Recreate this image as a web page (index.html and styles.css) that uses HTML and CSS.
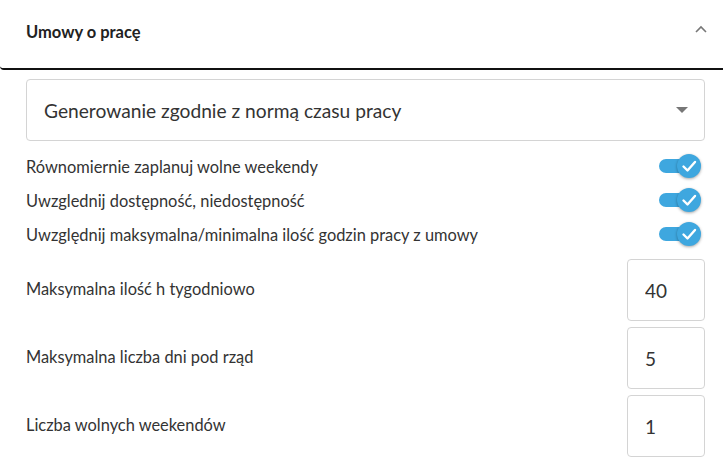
FILE: index.html
```html
<!DOCTYPE html>
<html lang="pl">

<head>
  <meta charset="UTF-8">
  <meta name="viewport" content="width=device-width, initial-scale=1.0">
  <title>Umowy o pracę</title>
  <link rel="stylesheet" href="styles.css">
</head>

<body>
  <section class="panel">
    <header class="panel-header">
      <h2 class="panel-title">Umowy o pracę</h2>
      <svg class="chevron" width="12" height="8" viewBox="0 0 12 8">
        <path d="M1 7L6 2L11 7" fill="none" stroke="#777" stroke-width="1.6"/>
      </svg>
    </header>

    <div class="panel-body">
      <div class="select-wrapper">
        <select class="mode-select">
          <option>Generowanie zgodnie z normą czasu pracy</option>
          <option>Generowanie dowolne</option>
        </select>
      </div>

      <ul class="switch-list">
        <li class="switch-row">
          <span>Równomiernie zaplanuj wolne weekendy</span>
          <label class="switch"><input type="checkbox" checked><span class="knob"></span></label>
        </li>
        <li class="switch-row">
          <span>Uwzglednij dostępność, niedostępność</span>
          <label class="switch"><input type="checkbox" checked><span class="knob"></span></label>
        </li>
        <li class="switch-row">
          <span>Uwzględnij maksymalna/minimalna ilość godzin pracy z umowy</span>
          <label class="switch"><input type="checkbox" checked><span class="knob"></span></label>
        </li>
      </ul>

      <div class="limits">
        <label class="limit-row">
          <span>Maksymalna ilość h tygodniowo</span>
          <input class="limit-input" type="number" value="40">
        </label>
        <label class="limit-row">
          <span>Maksymalna liczba dni pod rząd</span>
          <input class="limit-input" type="number" value="5">
        </label>
        <label class="limit-row">
          <span>Liczba wolnych weekendów</span>
          <input class="limit-input" type="number" value="1">
        </label>
      </div>
    </div>
  </section>
</body>

</html>
```

FILE: styles.css
```css
body {
  margin: 0;
  background: #fff;
  color: #333;
  font-family: Lato, "Liberation Sans", sans-serif;
}

.panel-header {
  height: 70px;
  box-sizing: border-box;
  display: flex;
  align-items: center;
  justify-content: space-between;
  padding: 0 16px 4px 26px;
  border-bottom: 2px solid #111;
  border-bottom-left-radius: 4px;
}

.panel-title {
  margin: 0;
  font-size: 16.5px;
  font-weight: 700;
  color: #222;
}

.chevron {
  margin-bottom: 6px;
}

.panel-body {
  padding: 9px 18px 0 26px;
}

.select-wrapper {
  position: relative;
}

.select-wrapper::after {
  content: '';
  position: absolute;
  right: 17px;
  top: 50%;
  margin-top: -3px;
  border-left: 6px solid transparent;
  border-right: 6px solid transparent;
  border-top: 6px solid #777;
  pointer-events: none;
}

select.mode-select {
  display: block;
  width: 100%;
  height: 62px;
  padding: 0 40px 0 17px;
  border: 1px solid #d4d4d4;
  border-radius: 4px;
  background: #fff;
  color: #333;
  font-family: inherit;
  font-size: 19.2px;
  appearance: none;
}

.switch-list {
  list-style: none;
  margin: 8px 0 0;
  padding: 0;
}

.switch-row {
  height: 34px;
  display: flex;
  align-items: center;
  justify-content: space-between;
  font-size: 16.4px;
}

.switch {
  position: relative;
  width: 42px;
  height: 24px;
  margin-right: 4px;
}

.switch input {
  display: none;
}

/* the track */
.switch::before {
  content: '';
  position: absolute;
  left: 0;
  top: 5px;
  width: 34px;
  height: 14px;
  border-radius: 7px;
  background: #3ea7df;
}

.knob {
  position: absolute;
  right: 0;
  top: 0;
  width: 24px;
  height: 24px;
  border-radius: 50%;
  background: #3ea7df url("data:image/svg+xml;charset=UTF-8,%3csvg xmlns='http://www.w3.org/2000/svg' width='24' height='24' viewBox='0 0 24 24'%3e%3cpath d='M6.5 12.5L10.5 16.5L18 8' fill='none' stroke='white' stroke-width='2.4' stroke-linecap='round' stroke-linejoin='round'/%3e%3c/svg%3e") no-repeat center;
  box-shadow: 0 1px 3px rgba(0, 0, 0, 0.35);
}

.limits {
  margin-top: 8px;
  display: flex;
  flex-direction: column;
  gap: 6px;
}

.limit-row {
  display: flex;
  align-items: center;
  justify-content: space-between;
  font-size: 16.4px;
}

.limit-row span {
  margin-bottom: 4px;
}

.limit-input {
  width: 78px;
  height: 62px;
  box-sizing: border-box;
  padding: 0 0 0 17px;
  border: 1px solid #d4d4d4;
  border-radius: 4px;
  color: #333;
  font-family: inherit;
  font-size: 19px;
  appearance: textfield;
}

.limit-input::-webkit-inner-spin-button,
.limit-input::-webkit-outer-spin-button {
  -webkit-appearance: none;
  margin: 0;
}
```
